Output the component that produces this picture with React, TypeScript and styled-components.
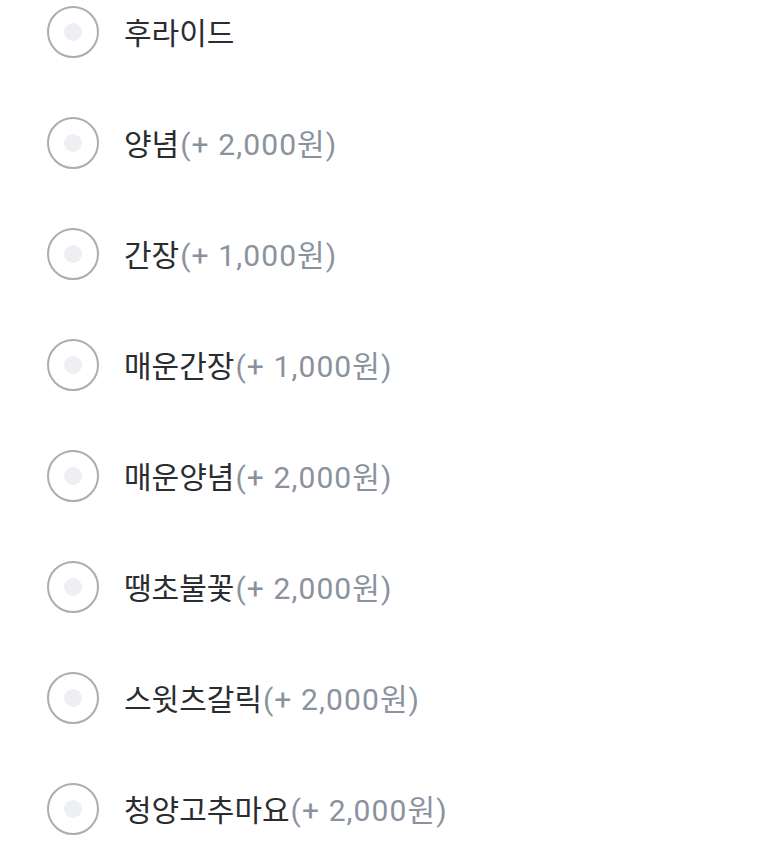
import styled, { createGlobalStyle } from 'styled-components';

const GlobalStyle = createGlobalStyle`
  body {
    margin: 0;
    background: #ffffff;
    font-family: Roboto, 'Noto Sans CJK KR', sans-serif;
  }
`;

const options = [
  { name: '후라이드', price: null },
  { name: '양념', price: 2000 },
  { name: '간장', price: 1000 },
  { name: '매운간장', price: 1000 },
  { name: '매운양념', price: 2000 },
  { name: '땡초불꽃', price: 2000 },
  { name: '스윗츠갈릭', price: 2000 },
  { name: '청양고추마요', price: 2000 },
];

export default function App() {
  return (
    <>
      <GlobalStyle />
      <List>
        {options.map((o) => (
          <Option key={o.name}>
            <Radio>
              <Dot />
            </Radio>
            <Label>
              {o.name}
              {o.price && <Price>(+ {o.price.toLocaleString('en-US')}원)</Price>}
            </Label>
          </Option>
        ))}
      </List>
    </>
  );
}

const List = styled.ul`
  list-style: none;
  margin: 0;
  padding: 6px 0 0 47px;
  display: flex;
  flex-direction: column;
  gap: 59px;
`;

const Option = styled.li`
  display: flex;
  align-items: center;
  height: 52px;
  gap: 25px;
`;

const Radio = styled.span`
  box-sizing: border-box;
  width: 52px;
  height: 52px;
  border-radius: 50%;
  border: 2px solid #a9adb4;
  display: flex;
  align-items: center;
  justify-content: center;
  flex-shrink: 0;
`;

const Dot = styled.span`
  width: 18px;
  height: 18px;
  border-radius: 50%;
  background: #eeeff2;
`;

const Label = styled.span`
  font-size: 30px;
  color: #2a2c30;
  white-space: nowrap;
  margin-top: -2px;
`;

const Price = styled.span`
  color: #8a929e;
  margin-left: 1px;
  letter-spacing: 1.1px;
`;
